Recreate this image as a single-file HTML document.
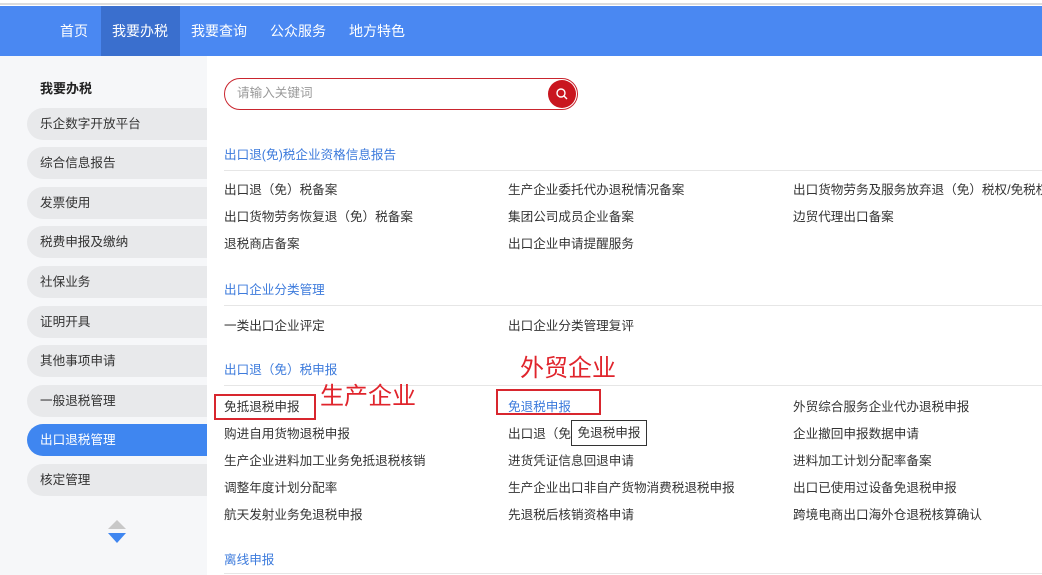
<!DOCTYPE html>
<html><head><meta charset="utf-8">
<style>
*{margin:0;padding:0;box-sizing:border-box}
body{width:1042px;height:575px;overflow:hidden;position:relative;background:#fff;font-family:"Liberation Sans","Noto Sans CJK SC",sans-serif;font-size:12.6px;color:#333}
.a{position:absolute;white-space:nowrap}
.nav{position:absolute;left:0;top:6px;width:1042px;height:50px;background:#4a88f2}
.nav span{position:absolute;top:0;height:50px;line-height:50px;color:#fff;font-size:14px}
.side{position:absolute;left:0;top:56px;width:207px;height:519px;background:#f6f7f9}
.pill{position:absolute;left:27px;width:180px;height:32px;line-height:32px;padding-left:13px;background:#e8e9eb;border-radius:16px 0 0 16px;font-size:12.6px;color:#333}
.pill.on{background:#3f86f0;color:#fff}
.h{position:absolute;left:224px;color:#3d7bdc;font-size:12.6px}
.ln{position:absolute;left:224px;width:818px;height:1px;background:#e6e6e6}
.t{position:absolute;font-size:12.6px;color:#333;white-space:nowrap;line-height:16px}
.red{position:absolute;color:#e0242c;font-size:24px;white-space:nowrap;line-height:26px}
.box{position:absolute;border:2px solid #d8262e}
</style></head><body>
<div class="a" style="left:0;top:3px;width:1042px;height:2px;background:#dcdcdc"></div>
<div class="nav">
<div class="a" style="left:101px;top:0;width:79px;height:50px;background:#3a6fce"></div>
<span style="left:60px">首页</span>
<span style="left:112px">我要办税</span>
<span style="left:191px">我要查询</span>
<span style="left:270px">公众服务</span>
<span style="left:349px">地方特色</span>
</div>
<div class="side">
<div class="a" style="left:40px;top:22px;font-weight:bold;font-size:13px;color:#222">我要办税</div>
<div class="pill" style="top:52px">乐企数字开放平台</div>
<div class="pill" style="top:91px">综合信息报告</div>
<div class="pill" style="top:131px">发票使用</div>
<div class="pill" style="top:170px">税费申报及缴纳</div>
<div class="pill" style="top:210px">社保业务</div>
<div class="pill" style="top:250px">证明开具</div>
<div class="pill" style="top:289px">其他事项申请</div>
<div class="pill" style="top:329px">一般退税管理</div>
<div class="pill on" style="top:368px">出口退税管理</div>
<div class="pill" style="top:408px">核定管理</div>
<div class="a" style="left:108px;top:464px;width:0;height:0;border-left:9px solid transparent;border-right:9px solid transparent;border-bottom:9px solid #c8c8c8"></div>
<div class="a" style="left:108px;top:477px;width:0;height:0;border-left:9px solid transparent;border-right:9px solid transparent;border-top:10px solid #3f86f0"></div>
</div>
<div class="a" style="left:224px;top:78px;width:354px;height:32px;border:1px solid #c9252e;border-radius:16px"></div>
<div class="t" style="left:237px;top:85px;color:#999">请输入关键词</div>
<div class="a" style="left:548px;top:80px;width:28px;height:28px;border-radius:50%;background:#c9161f"></div>
<svg class="a" style="left:555px;top:87px" width="14" height="14" viewBox="0 0 14 14"><circle cx="6" cy="6" r="4" fill="none" stroke="#fff" stroke-width="1.4"/><path d="M9 9l3 3" stroke="#fff" stroke-width="1.4"/></svg>

<div class="h" style="top:144px">出口退(免)税企业资格信息报告</div>
<div class="ln" style="top:170px"></div>
<div class="t" style="left:224px;top:182px">出口退（免）税备案</div>
<div class="t" style="left:508px;top:182px">生产企业委托代办退税情况备案</div>
<div class="t" style="left:793px;top:182px">出口货物劳务及服务放弃退（免）税权/免税权</div>
<div class="t" style="left:224px;top:209px">出口货物劳务恢复退（免）税备案</div>
<div class="t" style="left:508px;top:209px">集团公司成员企业备案</div>
<div class="t" style="left:793px;top:209px">边贸代理出口备案</div>
<div class="t" style="left:224px;top:236px">退税商店备案</div>
<div class="t" style="left:508px;top:236px">出口企业申请提醒服务</div>

<div class="h" style="top:279px">出口企业分类管理</div>
<div class="ln" style="top:305px"></div>
<div class="t" style="left:224px;top:318px">一类出口企业评定</div>
<div class="t" style="left:508px;top:318px">出口企业分类管理复评</div>

<div class="h" style="top:359px">出口退（免）税申报</div>
<div class="ln" style="top:385px"></div>
<div class="t" style="left:224px;top:399px">免抵退税申报</div>
<div class="t" style="left:508px;top:399px;color:#3d7bdc">免退税申报</div>
<div class="t" style="left:793px;top:399px">外贸综合服务企业代办退税申报</div>
<div class="t" style="left:224px;top:426px">购进自用货物退税申报</div>
<div class="t" style="left:508px;top:426px">出口退（免）税信息查询</div>
<div class="t" style="left:793px;top:426px">企业撤回申报数据申请</div>
<div class="t" style="left:224px;top:453px">生产企业进料加工业务免抵退税核销</div>
<div class="t" style="left:508px;top:453px">进货凭证信息回退申请</div>
<div class="t" style="left:793px;top:453px">进料加工计划分配率备案</div>
<div class="t" style="left:224px;top:480px">调整年度计划分配率</div>
<div class="t" style="left:508px;top:480px">生产企业出口非自产货物消费税退税申报</div>
<div class="t" style="left:793px;top:480px">出口已使用过设备免退税申报</div>
<div class="t" style="left:224px;top:507px">航天发射业务免退税申报</div>
<div class="t" style="left:508px;top:507px">先退税后核销资格申请</div>
<div class="t" style="left:793px;top:507px">跨境电商出口海外仓退税核算确认</div>

<div class="h" style="top:549px">离线申报</div>
<div class="ln" style="top:573px"></div>

<div class="box" style="left:214px;top:394px;width:102px;height:26px"></div>
<div class="box" style="left:496px;top:389px;width:105px;height:26px"></div>
<div class="red" style="left:320px;top:384px">生产企业</div>
<div class="red" style="left:520px;top:356px">外贸企业</div>
<div class="a" style="left:571px;top:420px;width:76px;height:26px;background:#fff;border:1px solid #333;font-size:12.6px;line-height:24px;text-align:center;color:#333">免退税申报</div>
</body></html>
